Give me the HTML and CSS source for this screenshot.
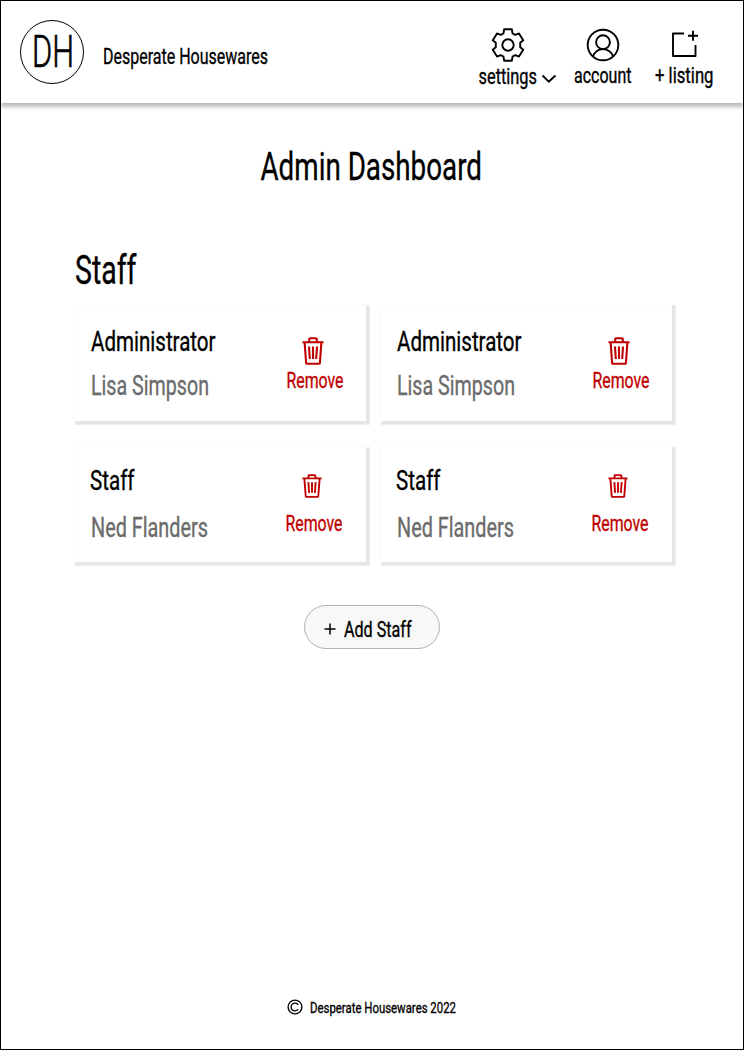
FILE: index.html
```html
<!DOCTYPE html>
<html lang="en">
<head>
<meta charset="utf-8">
<title>Admin Dashboard</title>
<link rel="stylesheet" href="styles.css">
</head>
<body>
<svg class="defs" aria-hidden="true">
  <symbol id="trash" viewBox="0 0 22 28" preserveAspectRatio="none">
    <path d="M.5 5.2h21M7.2 5V2.2q0-1 1-1h5.6q1 0 1 1V5M2.6 5.200l1.500 20.800q0 .8.8.8h12.200q.8 0 .8-.8l1.500-20.800M7 9.500l.8 12.500M11 9.500v12.500M15 9.500l-.8 12.500" fill="none" stroke="currentColor" stroke-width="2.1"/>
  </symbol>
</svg>
<div class="page">
  <header class="header">
    <svg class="logo" width="66" height="66">
      <circle cx="33" cy="33" r="31.5" fill="none" stroke="#000"/>
      <text class="label light" x="13" y="48" font-size="45" textLength="42" lengthAdjust="spacingAndGlyphs">DH</text>
    </svg>
    <svg class="brand" width="166" height="30"><text class="label" x="0" y="24" font-size="22.5" textLength="165" lengthAdjust="spacingAndGlyphs">Desperate Housewares</text></svg>
    <nav class="nav">
      <a class="nav-item settings">
        <svg class="gear" width="34" height="34" viewBox="0 0 34 34"><path d="M13.2 1.3h7.6l.8 4.2 2.6 1.4 3.8-1.5 4.2 6.8-3 2.6v4.4l3 2.6-4.2 6.8-3.8-1.5-2.6 1.4-.8 4.2h-7.6l-.8-4.2-2.6-1.4L6 28.600 1.800 21.800l3-2.600v-4.400l-3-2.600L6 5.400l3.800 1.500 2.600-1.400z" class="line"/><circle cx="17" cy="17" r="5.700" class="line"/></svg>
        <span class="row">
          <svg width="60" height="30"><text class="label" x="0.5" y="24" font-size="21.5" textLength="58.5" lengthAdjust="spacingAndGlyphs">settings</text></svg>
          <svg class="chevron" width="16" height="10"><path d="m1.500 1.500 6.200 6.200 6.800-6.200" class="line"/></svg>
        </span>
      </a>
      <a class="nav-item account">
        <svg width="34" height="34"><circle cx="17" cy="17" r="15.300" class="line"/><circle cx="17" cy="14.200" r="6.900" class="line"/><path d="M6.800 28.500c2-4.800 5.600-7.400 10.200-7.400s8.200 2.600 10.200 7.400" class="line"/></svg>
        <svg width="58" height="30"><text class="label" x="0" y="23" font-size="21.5" textLength="57.5" lengthAdjust="spacingAndGlyphs">account</text></svg>
      </a>
      <a class="nav-item listing">
        <svg width="34" height="34"><path d="M17 5.500H6v22.500h22.500V17M21 7.700h10M26 2.700v10" class="line"/></svg>
        <svg width="60" height="30"><text class="label" x="0" y="23" font-size="21.5" textLength="58.5" lengthAdjust="spacingAndGlyphs">+ listing</text></svg>
      </a>
    </nav>
  </header>
  <main class="main">
    <h1 class="title"><svg width="222" height="40"><text class="label" x="0.5" y="32" font-size="39.5" textLength="221.5" lengthAdjust="spacingAndGlyphs">Admin Dashboard</text></svg></h1>
    <h2 class="section"><svg width="64" height="40"><text class="label" x="0" y="32" font-size="40" textLength="61.5" lengthAdjust="spacingAndGlyphs">Staff</text></svg></h2>
    <div class="cards">
      <article class="card admin">
        <div class="person">
          <svg width="130" height="32"><text class="label" x="0" y="25.500" font-size="27.5" textLength="124.5" lengthAdjust="spacingAndGlyphs">Administrator</text></svg>
          <svg class="name" width="130" height="32"><text class="label" x="0" y="26" font-size="27.5" textLength="118" lengthAdjust="spacingAndGlyphs">Lisa Simpson</text></svg>
        </div>
        <div class="remove">
          <svg class="trash"><use href="#trash"/></svg>
          <svg width="58" height="26"><text class="label" x="0.5" y="20.500" font-size="22" textLength="57" lengthAdjust="spacingAndGlyphs">Remove</text></svg>
        </div>
      </article>
      <article class="card admin">
        <div class="person">
          <svg width="130" height="32"><text class="label" x="0" y="26" font-size="27.5" textLength="124.5" lengthAdjust="spacingAndGlyphs">Administrator</text></svg>
          <svg class="name" width="130" height="32"><text class="label" x="0" y="26" font-size="27.5" textLength="118" lengthAdjust="spacingAndGlyphs">Lisa Simpson</text></svg>
        </div>
        <div class="remove">
          <svg class="trash"><use href="#trash"/></svg>
          <svg width="58" height="26"><text class="label" x="0.5" y="20.500" font-size="22" textLength="57" lengthAdjust="spacingAndGlyphs">Remove</text></svg>
        </div>
      </article>
      <article class="card staff">
        <div class="person">
          <svg width="130" height="32"><text class="label" x="-1" y="26" font-size="27.5" textLength="44.5" lengthAdjust="spacingAndGlyphs">Staff</text></svg>
          <svg class="name" width="130" height="32"><text class="label" x="0" y="26" font-size="27.5" textLength="117" lengthAdjust="spacingAndGlyphs">Ned Flanders</text></svg>
        </div>
        <div class="remove">
          <svg class="trash"><use href="#trash"/></svg>
          <svg width="58" height="26"><text class="label" x="0.5" y="20" font-size="22" textLength="57" lengthAdjust="spacingAndGlyphs">Remove</text></svg>
        </div>
      </article>
      <article class="card staff">
        <div class="person">
          <svg width="130" height="32"><text class="label" x="-1" y="26" font-size="27.5" textLength="44.5" lengthAdjust="spacingAndGlyphs">Staff</text></svg>
          <svg class="name" width="130" height="32"><text class="label" x="0" y="26" font-size="27.5" textLength="117" lengthAdjust="spacingAndGlyphs">Ned Flanders</text></svg>
        </div>
        <div class="remove">
          <svg class="trash"><use href="#trash"/></svg>
          <svg width="58" height="26"><text class="label" x="0.5" y="20" font-size="22" textLength="57" lengthAdjust="spacingAndGlyphs">Remove</text></svg>
        </div>
      </article>
    </div>
    <button class="add">
      <svg width="12" height="12"><path d="M6 .500v11M.500 6h11" stroke="#000" stroke-width="1.500"/></svg>
      <svg width="70" height="28"><text class="label" x="0" y="22" font-size="22" textLength="67.5" lengthAdjust="spacingAndGlyphs">Add Staff</text></svg>
    </button>
  </main>
  <footer class="footer">
    <svg width="16" height="16"><circle cx="8" cy="8" r="6.900" fill="none" stroke="#000" stroke-width="1.400"/><path d="M11.200 5.800a3.900 3.900 0 1 0 0 4.400" fill="none" stroke="#000" stroke-width="1.300"/></svg>
    <svg width="147" height="20"><text class="label" x="0" y="15.500" font-size="15.2" textLength="146" lengthAdjust="spacingAndGlyphs">Desperate Housewares 2022</text></svg>
  </footer>
</div>
</body>
</html>
```
FILE: styles.css
```css
* { box-sizing: border-box; }
body { margin: 0; background: #fff; }
svg { display: block; overflow: visible; flex: none; }
.defs { display: none; }
.label { font-family: Roboto, sans-serif; font-weight: 400; fill: currentColor; stroke: currentColor; stroke-width: .35; }
.light { font-weight: 300; stroke-width: .7; }
.line { fill: none; stroke: #000; stroke-width: 1.9; stroke-linejoin: round; }
.page { width: 744px; height: 1050px; border: 1px solid #000; display: flex; flex-direction: column; color: #000; }
.header { height: 102px; flex: none; display: flex; align-items: flex-start; padding: 18px 30px 0 18px; box-shadow: 0 4px 4px rgba(0,0,0,.27); }
.brand { margin: 21px 0 0 18px; }
.nav { display: flex; margin: 9px 0 0 auto; }
.nav-item { display: flex; flex-direction: column; }
.nav-item > svg:first-child { align-self: center; }
.nav-item > svg + svg { margin-top: -2px; }
.settings { width: 79px; margin-right: 17px; }
.settings > .gear:first-child { align-self: flex-start; margin-left: 13px; }
.row { display: flex; margin-top: -2px; }
.chevron { margin: 14px 0 0 3px; }
.account { width: 58px; margin-right: 23px; }
.listing { width: 58px; }
.main { flex: 1; display: flex; flex-direction: column; }
.title { margin: 45px auto 0 259px; }
.section { margin: 64px 0 0 74px; }
.cards { display: grid; grid-template-columns: 291px 291px; grid-template-rows: 116px 115px; gap: 26px 15px; margin: 13px 0 0 74px; }
.card { display: flex; justify-content: space-between; background: #fff; box-shadow: 2px 2px 0 1px #e5e5e5, 2px 2px 0 2px #ededed, 0 0 0 1px #fafafa; }
.person { margin: 20px 0 0 16px; }
.name { color: #6b6b6b; margin-top: 12px; }
.remove { color: #c00000; width: 58px; margin: 32px 22px 0 0; }
.trash { width: 22px; height: 28px; margin-left: 16px; }
.admin .remove .trash + svg { margin-top: 2px; }
.staff .person { margin-top: 17px; }
.staff .name { margin-top: 15px; }
.staff .remove { margin: 27px 23px 0 0; }
.staff .trash { height: 24px; width: 20px; margin-left: 17px; }
.staff .trash + svg { margin-top: 13px; }
.add { width: 136px; height: 44px; margin: 43px 0 0 303px; border: 1px solid #b3b3b3; border-radius: 22px; background: #f8f8f8; padding: 3px 0 0 19px; display: flex; align-items: center; gap: 8px; color: #000; }
.footer { display: flex; align-items: center; gap: 7px; margin: 0 0 32px 286px; height: 20px; }
```
